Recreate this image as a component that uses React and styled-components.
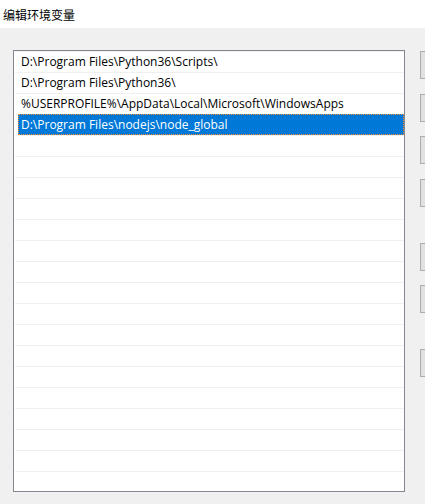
import React from "react";
import styled, { createGlobalStyle } from "styled-components";

const Global = createGlobalStyle`
  html, body {
    margin: 0;
    padding: 0;
    overflow: hidden;
    background: #f0f0f0;
  }
  body {
    width: 425px;
    height: 504px;
    font-family: "Segoe UI", "Open Sans", "Noto Sans CJK SC", sans-serif;
  }
`;

const Window = styled.div`
  width: 425px;
  height: 504px;
  display: flex;
  flex-direction: column;
  background: #f0f0f0;
  overflow: hidden;
`;

const TitleBar = styled.div`
  height: 28px;
  flex: none;
  background: #ffffff;
  display: flex;
  align-items: center;
  padding-left: 3px;
  font-family: "Noto Sans CJK SC", "Microsoft YaHei", sans-serif;
  font-size: 12px;
  color: #000;
`;

const Body = styled.div`
  display: flex;
  align-items: flex-start;
  gap: 15px;
  padding: 22px 0 0 13px;
`;

const List = styled.div`
  flex: none;
  width: 389px;
  height: 440px;
  border: 1px solid #828790;
  background: #ffffff;
  padding: 0 0 0 1px;
  overflow: hidden;
  box-sizing: content-box;
`;

const Row = styled.div`
  height: 21px;
  box-shadow: inset 0 1px 0 #f0f0f0;
  padding-left: 3px;
`;

const Cell = styled.div`
  height: 21px;
  box-sizing: border-box;
  padding-left: 3px;
  display: flex;
  align-items: center;
  font-family: "Segoe UI", "Open Sans", "Noto Sans CJK SC", sans-serif;
  font-size: 12px;
  white-space: nowrap;
  color: ${(p) => (p.$selected ? "#ffffff" : "#000000")};
  background: ${(p) => (p.$selected ? "#0078d7" : "transparent")};
  outline: ${(p) => (p.$selected ? "1px dotted #ff8a28" : "none")};
  outline-offset: -1px;
`;

const Buttons = styled.div`
  display: flex;
  flex-direction: column;
  padding-top: 1px;
`;

const Button = styled.button`
  width: 75px;
  height: 28px;
  margin: 0;
  margin-top: ${(p) => p.$gap}px;
  border: 1px solid #adadad;
  background: #e1e1e1;
  padding: 0;
  flex: none;
`;

const paths = [
  "D:\\Program Files\\Python36\\Scripts\\",
  "D:\\Program Files\\Python36\\",
  "%USERPROFILE%\\AppData\\Local\\Microsoft\\WindowsApps",
  "D:\\Program Files\\nodejs\\node_global",
];

const buttons = [
  { label: "新建(N)", gap: 0 },
  { label: "编辑(E)", gap: 15 },
  { label: "浏览(B)...", gap: 14 },
  { label: "删除(D)", gap: 15 },
  { label: "上移(U)", gap: 36 },
  { label: "下移(O)", gap: 14 },
  { label: "编辑文本(T)...", gap: 36 },
];

export default function App() {
  const rows = Array.from({ length: 21 }, (_, i) => paths[i] || "");
  return (
    <>
      <Global />
      <Window>
        <TitleBar>编辑环境变量</TitleBar>
        <Body>
          <List>
            {rows.map((text, i) => (
              <Row key={i}>
                <Cell $selected={i === 3}>{text}</Cell>
              </Row>
            ))}
          </List>
          <Buttons>
            {buttons.map((b) => (
              <Button key={b.label} $gap={b.gap} aria-label={b.label} />
            ))}
          </Buttons>
        </Body>
      </Window>
    </>
  );
}
